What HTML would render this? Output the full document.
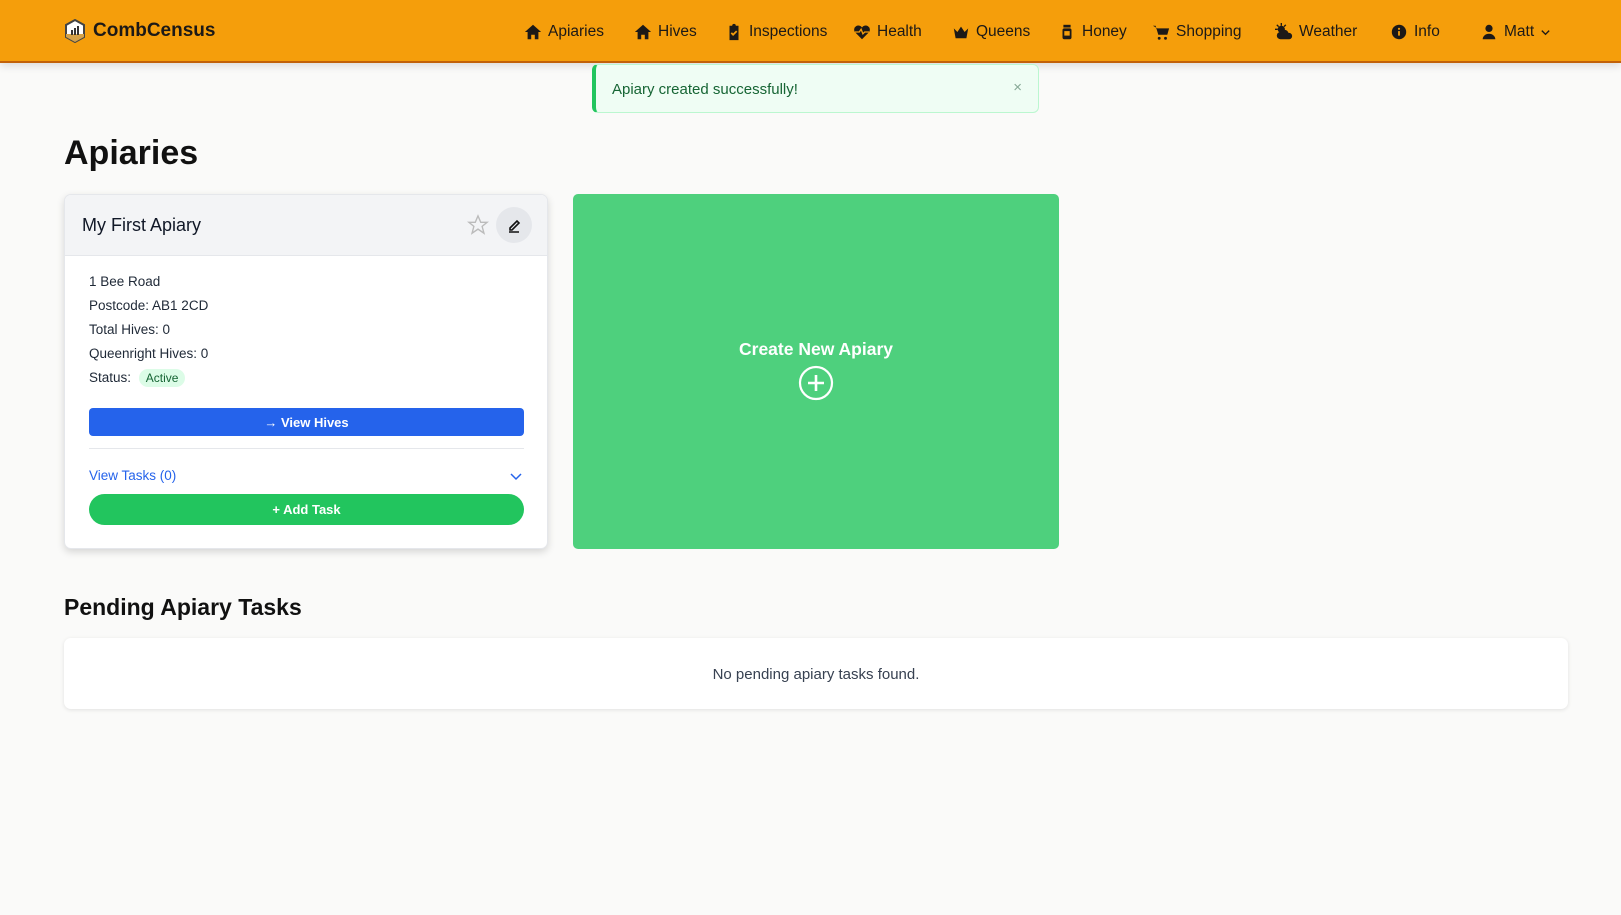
<!DOCTYPE html>
<html><head><meta charset="utf-8"><style>
*{box-sizing:border-box;margin:0;padding:0}
body{width:1621px;height:915px;background:#fafaf9;font-family:"Liberation Sans",sans-serif;color:#1f2937;position:relative;overflow:hidden}
.nav{position:absolute;left:0;top:0;width:1621px;height:63px;background:#f59e0b;border-bottom:2px solid #c2620a;box-shadow:0 3px 8px rgba(0,0,0,.12)}
.logo{position:absolute;left:64px;top:19px;font-weight:bold;font-size:19px;color:#1c1917;display:flex;align-items:center;gap:7px}
.ni{position:absolute;top:23px;font-size:15.5px;color:#1c1917;display:flex;align-items:center;gap:6px;white-space:nowrap}
.ni svg{width:18px;height:18px;fill:#1c1917}
.toast{position:absolute;left:592px;top:64px;width:447px;height:49px;background:#effdf4;border:1px solid #bbf7d0;border-left:4px solid #22c55e;border-radius:6px;font-size:15px;color:#166534;padding:16px 0 0 16px}
.toast .x{position:absolute;right:16px;top:14px;color:#86a895;font-size:15px}
h1{position:absolute;left:64px;top:134px;font-size:34px;font-weight:bold;color:#111}
.card{position:absolute;left:64px;top:194px;width:484px;height:355px;background:#fff;border:1px solid #e5e7eb;border-radius:7px;box-shadow:0 3px 8px rgba(0,0,0,.15);overflow:hidden}
.ch{height:61px;background:#f3f4f6;border-bottom:1px solid #e5e7eb;position:relative}
.ch .t{position:absolute;left:17px;top:20px;font-size:18px;color:#111827}
.edit{position:absolute;right:15px;top:12px;width:36px;height:36px;border-radius:50%;background:#e5e7eb;display:flex;align-items:center;justify-content:center}
.star{position:absolute;right:58px;top:19px}
.ln{position:absolute;left:24px;font-size:13.5px;color:#1f2937}
.badge{background:#dcfce7;color:#166534;border-radius:10px;padding:2px 7px;font-size:12px;margin-left:4px}
.btn{position:absolute;left:24px;width:435px;color:#fff;font-weight:bold;font-size:13px;display:flex;align-items:center;justify-content:center;gap:6px}
.green{position:absolute;left:573px;top:194px;width:486px;height:355px;background:#4ed07d;border-radius:5px;color:#fff}
h2{position:absolute;left:64px;top:594px;font-size:23px;font-weight:bold;color:#111}
.box{position:absolute;left:64px;top:638px;width:1504px;height:71px;background:#fff;border-radius:7px;box-shadow:0 1px 4px rgba(0,0,0,.1);text-align:center;font-size:15px;color:#374151;padding-top:28px}
</style></head><body>
<div class="nav">
 <div class="logo"><svg width="22" height="24" viewBox="0 0 22 24"><path d="M11 1L20 6V18L11 23L2 18V6Z" fill="#fff" stroke="#444" stroke-width="2"/><path d="M2 15H20V18L11 23L2 18Z" fill="#d4a24a"/><rect x="7" y="11" width="2" height="5" fill="#333"/><rect x="10" y="9" width="2" height="7" fill="#333"/><rect x="13" y="7" width="2" height="9" fill="#333"/></svg>CombCensus</div>
 <div class="ni" style="left:524px"><svg viewBox="0 0 20 20"><path d="M10 2L1 10h3v8h4v-5h4v5h4v-8h3z"/></svg>Apiaries</div>
 <div class="ni" style="left:634px"><svg viewBox="0 0 20 20"><path d="M10 2L1 10h3v8h4v-5h4v5h4v-8h3z"/></svg>Hives</div>
 <div class="ni" style="left:725px"><svg viewBox="0 0 20 20"><path d="M5 3h3a2 2 0 014 0h3v16H5z"/><path d="M7 11l2 2 4-4" stroke="#f59e0b" stroke-width="2" fill="none"/></svg>Inspections</div>
 <div class="ni" style="left:853px"><svg viewBox="0 0 20 20"><path d="M10 18L2 10a4.5 4.5 0 018-5 4.5 4.5 0 018 5z"/><path d="M2 10h5l2-3 2 5 2-2h5" stroke="#f59e0b" stroke-width="1.5" fill="none"/></svg>Health</div>
 <div class="ni" style="left:952px"><svg viewBox="0 0 20 20"><path d="M2 6l4 4 4-6 4 6 4-4-2 11H4z"/></svg>Queens</div>
 <div class="ni" style="left:1058px"><svg viewBox="0 0 20 20"><rect x="6" y="2" width="8" height="3"/><rect x="5" y="6" width="10" height="12" rx="2"/><rect x="7" y="9" width="6" height="5" fill="#f59e0b"/></svg>Honey</div>
 <div class="ni" style="left:1152px"><svg viewBox="0 0 20 20"><path d="M1 3h3l3 10h10l2-7H6"/><circle cx="8" cy="17" r="1.6"/><circle cx="15" cy="17" r="1.6"/></svg>Shopping</div>
 <div class="ni" style="left:1275px"><svg viewBox="0 0 20 20"><circle cx="7" cy="7" r="4"/><path d="M7 0v3M0 7h3M2 2l2 2M12 2l-2 2" stroke="#1c1917" stroke-width="1.5"/><path d="M6 18a4 4 0 010-8 5 5 0 019 1 3.5 3.5 0 011 7z"/></svg>Weather</div>
 <div class="ni" style="left:1390px"><svg viewBox="0 0 20 20"><circle cx="10" cy="10" r="8"/><rect x="9" y="9" width="2" height="5" fill="#f59e0b"/><circle cx="10" cy="6.5" r="1.2" fill="#f59e0b"/></svg>Info</div>
 <div class="ni" style="left:1480px"><svg viewBox="0 0 20 20"><circle cx="10" cy="6" r="4"/><path d="M3 18a7 6 0 0114 0z"/></svg>Matt <svg viewBox="0 0 12 12" style="width:11px;height:11px"><path d="M2 4l4 4 4-4" fill="none" stroke="#1c1917" stroke-width="1.5"/></svg></div>
</div>
<div class="toast">Apiary created successfully!<span class="x">×</span></div>
<h1>Apiaries</h1>
<div class="card">
 <div class="ch"><div class="t">My First Apiary</div>
  <svg class="star" width="22" height="22" viewBox="0 0 24 24"><path d="M12 2l3 7h7l-5.5 4.5L18.5 21 12 16.5 5.5 21l2-7.5L2 9h7z" fill="none" stroke="#bbb" stroke-width="1.5"/></svg>
  <div class="edit"><svg width="16" height="16" viewBox="0 0 16 16"><path d="M4 11L11 4l2 2-7 7H4z" fill="none" stroke="#111" stroke-width="1.6"/><path d="M3 15h10" stroke="#111" stroke-width="1.6"/></svg></div></div>
 <div class="ln" style="top:79px">1 Bee Road</div>
 <div class="ln" style="top:103px">Postcode: AB1 2CD</div>
 <div class="ln" style="top:127px">Total Hives: 0</div>
 <div class="ln" style="top:151px">Queenright Hives: 0</div>
 <div class="ln" style="top:175px">Status: <span class="badge">Active</span></div>
 <div class="btn" style="top:213px;height:28px;background:#2563eb;border-radius:4px">&#8594; View Hives</div>
 <div style="position:absolute;left:24px;top:253px;width:435px;border-top:1px solid #e5e7eb"></div>
 <div class="ln" style="top:273px;color:#2563eb">View Tasks (0)</div>
 <svg style="position:absolute;left:445px;top:275px" width="12" height="12" viewBox="0 0 12 12"><path d="M1 4l5 5 5-5" fill="none" stroke="#2563eb" stroke-width="1.5"/></svg>
 <div class="btn" style="top:299px;height:31px;background:#22c55e;border-radius:16px">+ Add Task</div>
</div>
<div class="green">
 <div style="position:absolute;top:145px;width:100%;text-align:center;font-weight:bold;font-size:17.5px">Create New Apiary</div>
 <svg style="position:absolute;left:225px;top:171px" width="36" height="36" viewBox="0 0 36 36"><circle cx="18" cy="18" r="16" fill="none" stroke="#fff" stroke-width="2.2"/><path d="M18 10v16M10 18h16" stroke="#fff" stroke-width="2.6"/></svg>
</div>
<h2>Pending Apiary Tasks</h2>
<div class="box">No pending apiary tasks found.</div>
</body></html>
